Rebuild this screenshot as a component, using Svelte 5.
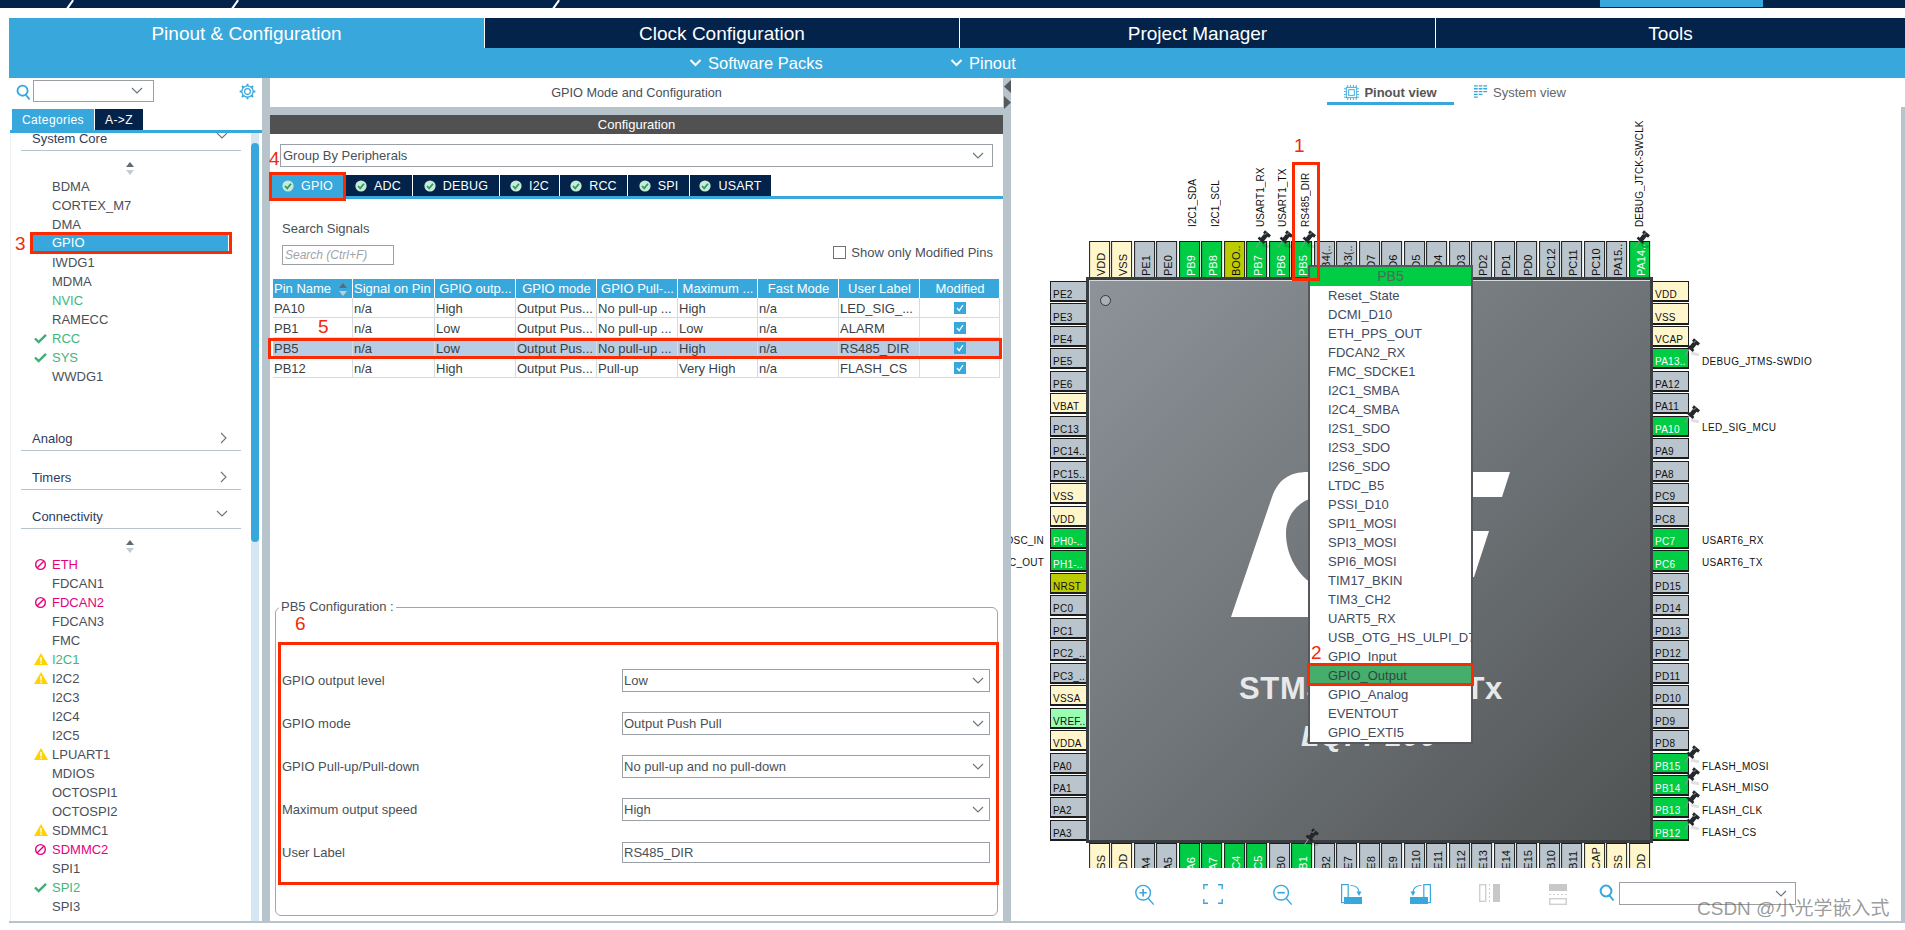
<script>
  const topPins = [
    ['VDD', 'p'], ['VSS', 'p'], ['PE1', ''], ['PE0', ''], ['PB9', 'g'], ['PB8', 'g'], ['BOO..', 'o'], ['PB7', 'g'], ['PB6', 'g'], ['PB5', 'g'],
    ['PB4(..', ''], ['PB3(..', ''], ['PD7', ''], ['PD6', ''], ['PD5', ''], ['PD4', ''], ['PD3', ''], ['PD2', ''], ['PD1', ''], ['PD0', ''],
    ['PC12', ''], ['PC11', ''], ['PC10', ''], ['PA15..', ''], ['PA14..', 'g']
  ];
  const leftPins = [
    ['PE2', ''], ['PE3', ''], ['PE4', ''], ['PE5', ''], ['PE6', ''], ['VBAT', 'p'], ['PC13', ''], ['PC14..', ''], ['PC15..', ''], ['VSS', 'p'],
    ['VDD', 'p'], ['PH0-..', 'g'], ['PH1-..', 'g'], ['NRST', 'o'], ['PC0', ''], ['PC1', ''], ['PC2_..', ''], ['PC3_..', ''], ['VSSA', 'p'], ['VREF..', 'm'],
    ['VDDA', 'p'], ['PA0', ''], ['PA1', ''], ['PA2', ''], ['PA3', '']
  ];
  const rightPins = [
    ['VDD', 'p'], ['VSS', 'p'], ['VCAP', 'p'], ['PA13..', 'g'], ['PA12', ''], ['PA11', ''], ['PA10', 'g'], ['PA9', ''], ['PA8', ''], ['PC9', ''],
    ['PC8', ''], ['PC7', 'g'], ['PC6', 'g'], ['PD15', ''], ['PD14', ''], ['PD13', ''], ['PD12', ''], ['PD11', ''], ['PD10', ''], ['PD9', ''],
    ['PD8', ''], ['PB15', 'g'], ['PB14', 'g'], ['PB13', 'g'], ['PB12', 'g']
  ];
  const bottomPins = [
    ['VSS', 'p'], ['VDD', 'p'], ['PA4', ''], ['PA5', ''], ['PA6', 'g'], ['PA7', 'g'], ['PC4', 'g'], ['PC5', 'g'], ['PB0', ''], ['PB1', 'g'],
    ['PB2', ''], ['PE7', ''], ['PE8', ''], ['PE9', ''], ['PE10', ''], ['PE11', ''], ['PE12', ''], ['PE13', ''], ['PE14', ''], ['PE15', ''],
    ['PB10', ''], ['PB11', ''], ['VCAP', 'p'], ['VSS', 'p'], ['VDD', 'p']
  ];

  const topLabels = [
    ['I2C1_SDA', 1194], ['I2C1_SCL', 1217], ['USART1_RX', 1262], ['USART1_TX', 1284], ['RS485_DIR', 1307], ['DEBUG_JTCK-SWCLK', 1641]
  ];
  const rightLabels = [
    ['DEBUG_JTMS-SWDIO', 362], ['LED_SIG_MCU', 428], ['USART6_RX', 541], ['USART6_TX', 563],
    ['FLASH_MOSI', 767], ['FLASH_MISO', 788], ['FLASH_CLK', 811], ['FLASH_CS', 833]
  ];
  const leftLabels = [['RCC_OSC_IN', 541], ['RCC_OSC_OUT', 563]];
  const thumbtacks = [
    [1256, 230], [1278, 230], [1301, 230], [1635, 230],
    [1685, 338], [1685, 405], [1685, 745], [1685, 767], [1685, 790], [1685, 812], [1304, 828]
  ];

  const popupItems = ['Reset_State', 'DCMI_D10', 'ETH_PPS_OUT', 'FDCAN2_RX', 'FMC_SDCKE1', 'I2C1_SMBA', 'I2C4_SMBA', 'I2S1_SDO', 'I2S3_SDO', 'I2S6_SDO', 'LTDC_B5', 'PSSI_D10', 'SPI1_MOSI', 'SPI3_MOSI', 'SPI6_MOSI', 'TIM17_BKIN', 'TIM3_CH2', 'UART5_RX', 'USB_OTG_HS_ULPI_D7', 'GPIO_Input', 'GPIO_Output', 'GPIO_Analog', 'EVENTOUT', 'GPIO_EXTI5'];

  const systemCore = [['BDMA'], ['CORTEX_M7'], ['DMA'], ['GPIO', 'sel'], ['IWDG1'], ['MDMA'], ['NVIC', 'ok'], ['RAMECC'], ['RCC', 'ok', 'check'], ['SYS', 'ok', 'check'], ['WWDG1']];
  const connectivity = [['ETH', 'bad', 'ban'], ['FDCAN1'], ['FDCAN2', 'bad', 'ban'], ['FDCAN3'], ['FMC'], ['I2C1', 'ok', 'warn'], ['I2C2', '', 'warn'], ['I2C3'], ['I2C4'], ['I2C5'], ['LPUART1', '', 'warn'], ['MDIOS'], ['OCTOSPI1'], ['OCTOSPI2'], ['SDMMC1', '', 'warn'], ['SDMMC2', 'bad', 'ban'], ['SPI1'], ['SPI2', 'ok', 'check'], ['SPI3']];

  const ipTabs = [['GPIO', 72], ['ADC', 69], ['DEBUG', 87], ['I2C', 60], ['RCC', 68], ['SPI', 62], ['USART', 82]];
  const columns = ['Pin Name', 'Signal on Pin', 'GPIO outp...', 'GPIO mode', 'GPIO Pull-...', 'Maximum ...', 'Fast Mode', 'User Label', 'Modified'];
  const rows = [
    ['PA10', 'n/a', 'High', 'Output Pus...', 'No pull-up ...', 'High', 'n/a', 'LED_SIG_...'],
    ['PB1', 'n/a', 'Low', 'Output Pus...', 'No pull-up ...', 'Low', 'n/a', 'ALARM'],
    ['PB5', 'n/a', 'Low', 'Output Pus...', 'No pull-up ...', 'High', 'n/a', 'RS485_DIR'],
    ['PB12', 'n/a', 'High', 'Output Pus...', 'Pull-up', 'Very High', 'n/a', 'FLASH_CS']
  ];
  const configRows = [
    ['GPIO output level', 'Low'], ['GPIO mode', 'Output Push Pull'], ['GPIO Pull-up/Pull-down', 'No pull-up and no pull-down'], ['Maximum output speed', 'High']
  ];
</script>

{#snippet chevron()}
  <svg class="chev" viewBox="0 0 12 8" width="12" height="8"><path d="M1 1l5 5 5-5" fill="none" stroke="#6b7278" stroke-width="1.1" /></svg>
{/snippet}

{#snippet sideItem(item)}
  <div class="side-item {item[1] || ''}">
    <span class="mark">
      {#if item[2] === 'check'}
        <svg viewBox="0 0 14 12" width="13" height="11"><path d="M1 6l4 4 8-8" fill="none" stroke="#3fae74" stroke-width="2.6" /></svg>
      {:else if item[2] === 'ban'}
        <svg viewBox="0 0 14 14" width="13" height="13"><circle cx="7" cy="7" r="5.2" fill="none" stroke="#e6007e" stroke-width="1.5" /><path d="M3.5 10.5l7-7" stroke="#e6007e" stroke-width="1.5" /></svg>
      {:else if item[2] === 'warn'}
        <svg viewBox="0 0 14 12" width="14" height="12"><path d="M7 0l7 12H0z" fill="#ffd200" /><path d="M7 4v4.5M7 9.5v1.5" stroke="#fff" stroke-width="1.5" /></svg>
      {/if}
    </span>
    <span class="item-text">{item[0]}</span>
  </div>
{/snippet}

{#snippet sortArrows()}
  <svg viewBox="0 0 8 13" width="8" height="13"><path d="M4 0l4 5H0z" fill="#5f6a72" /><path d="M4 13l4-5H0z" fill="#c4ccd2" /></svg>
{/snippet}

{#snippet okDot()}
  <svg viewBox="0 0 12 12" width="12" height="12"><circle cx="6" cy="6" r="5.6" fill="#c9ead8" /><path d="M3 6l2.2 2.4L9 3.8" fill="none" stroke="#27a162" stroke-width="1.8" /></svg>
{/snippet}

{#snippet rotateIcon()}
  <rect x=".6" y=".6" width="6.6" height="18" fill="none" stroke="#38a8dc" stroke-width="1.2" />
  <rect x="3" y="13" width="18" height="7" fill="#38a8dc" />
  <path d="M9.5 1.5c4.5 0 8 2 8.5 6.5" fill="none" stroke="#38a8dc" stroke-width="1.2" />
  <path d="M15.5 7.5h5l-2.5 4.5z" fill="#38a8dc" />
{/snippet}

<div class="app">
  <div class="menubar">
    <i class="slash s1"></i><i class="slash s2"></i><i class="slash s3"></i>
    <span class="menu-active"></span>
  </div>

  <nav class="maintabs">
    <div class="maintab active">Pinout &amp; Configuration</div>
    <div class="maintab">Clock Configuration</div>
    <div class="maintab">Project Manager</div>
    <div class="maintab">Tools</div>
  </nav>
  <div class="subbar">
    <span class="sub sub-packs"><svg viewBox="0 0 12 8" width="13" height="8"><path d="M1 1l5 5 5-5" fill="none" stroke="#fff" stroke-width="2" /></svg>Software Packs</span>
    <span class="sub sub-pinout"><svg viewBox="0 0 12 8" width="13" height="8"><path d="M1 1l5 5 5-5" fill="none" stroke="#fff" stroke-width="2" /></svg>Pinout</span>
  </div>

  <div class="workspace">
    <aside class="sidebar">
      <div class="side-search">
        <svg class="search-ico" viewBox="0 0 16 18" width="15" height="17"><circle cx="7" cy="7" r="5.4" fill="none" stroke="#38a8dc" stroke-width="2" /><path d="M10.5 11.5l4 5" stroke="#38a8dc" stroke-width="2" /></svg>
        <div class="combo">{@render chevron()}</div>
        <svg class="gear" viewBox="0 0 20 20" width="17" height="17"><circle cx="10" cy="10" r="3.4" fill="none" stroke="#38a8dc" stroke-width="1.4" /><circle cx="10" cy="10" r="6.6" fill="none" stroke="#38a8dc" stroke-width="1.4" /><path d="M10 .8v2.6M10 16.6v2.6M.8 10h2.6M16.6 10h2.6M3.5 3.5l1.8 1.8M14.7 14.7l1.8 1.8M3.5 16.5l1.8-1.8M14.7 5.3l1.8-1.8" stroke="#38a8dc" stroke-width="2.2" /></svg>
      </div>
      <div class="cat-tabs">
        <div class="cat-tab on">Categories</div>
        <div class="cat-tab">A-&gt;Z</div>
      </div>
      <div class="side-body">
        <div class="tree">
          <div class="group first">System Core <span class="g-ico">{@render chevron()}</span></div>
          <div class="sort">{@render sortArrows()}</div>
          {#each systemCore as item}{@render sideItem(item)}{/each}
          <div class="group analog">Analog <span class="g-ico"><svg viewBox="0 0 8 12" width="8" height="12"><path d="M1 1l5 5-5 5" fill="none" stroke="#6b7278" stroke-width="1.1" /></svg></span></div>
          <div class="group">Timers <span class="g-ico"><svg viewBox="0 0 8 12" width="8" height="12"><path d="M1 1l5 5-5 5" fill="none" stroke="#6b7278" stroke-width="1.1" /></svg></span></div>
          <div class="group">Connectivity <span class="g-ico">{@render chevron()}</span></div>
          <div class="sort">{@render sortArrows()}</div>
          {#each connectivity as item}{@render sideItem(item)}{/each}
        </div>
        <div class="scroll"><div class="thumb"></div></div>
      </div>
      <span class="callout n3">3</span>
      <span class="redbox gpio-box"></span>
    </aside>

    <div class="vsep"></div>

    <section class="center">
      <div class="center-title">GPIO Mode and Configuration</div>
      <div class="hband"></div>
      <div class="conf-bar">Configuration</div>
      <div class="group-select"><span>Group By Peripherals</span>{@render chevron()}</div>
      <div class="ip-tabs">
        {#each ipTabs as tab, i}
          <div class="ip-tab" class:on={i === 0} style="width:{tab[1]}px">{@render okDot()}<span>{tab[0]}</span></div>
        {/each}
      </div>
      <div class="signals">
        <div class="signal-left">
          <div class="muted">Search Signals</div>
          <div class="search-box">Search (Ctrl+F)</div>
        </div>
        <label class="only-mod"><span class="box"></span>Show only Modified Pins</label>
      </div>
      <div class="pin-table">
        <div class="tr head">
          {#each columns as col, i}
            <div class="td" class:left={i < 2}>{col}{#if i === 0}<span class="th-sort">{@render sortArrows()}</span>{/if}</div>
          {/each}
        </div>
        {#each rows as row, r}
          <div class="tr" class:picked={r === 2}>
            {#each row as cell}<div class="td">{cell}</div>{/each}
            <div class="td tick"><svg viewBox="0 0 12 12" width="12" height="12"><rect width="12" height="12" fill="#38a8dc" /><path d="M3 6l2.2 2.6L9 3" fill="none" stroke="#fff" stroke-width="1.3" /></svg></div>
          </div>
        {/each}
      </div>

      <fieldset class="pin-config">
        <legend>PB5 Configuration :</legend>
        <div class="config-rows">
          {#each configRows as c}
            <div class="config-row">
              <span>{c[0]}</span>
              <div class="field"><span>{c[1]}</span>{@render chevron()}</div>
            </div>
          {/each}
          <div class="config-row">
            <span>User Label</span>
            <div class="field input"><span>RS485_DIR</span></div>
          </div>
        </div>
      </fieldset>

      <span class="callout n4">4</span>
      <span class="callout n5">5</span>
      <span class="callout n6">6</span>
      <span class="redbox tab-box"></span>
      <span class="redbox row-box"></span>
      <span class="redbox conf-box"></span>
    </section>

    <div class="vsep grip">
      <svg viewBox="0 0 7 13" width="7" height="13"><path d="M0 6.5L7 0v13z" fill="#55595d" /></svg>
      <svg viewBox="0 0 7 13" width="7" height="13"><path d="M7 6.5L0 0v13z" fill="#55595d" /></svg>
    </div>

    <section class="pinout">
      <div class="view-tabs">
        <div class="view-tab on">
          <svg viewBox="0 0 16 16" width="15" height="15"><rect x="2.5" y="2.5" width="11" height="11" fill="none" stroke="#38a8dc" /><rect x="5" y="5" width="6" height="6" fill="none" stroke="#38a8dc" /><path d="M4 0v2M7 0v2M10 0v2M13 0v2M4 14v2M7 14v2M10 14v2M13 14v2M0 4h2M0 7h2M0 10h2M0 13h2M14 4h2M14 7h2M14 10h2M14 13h2" stroke="#38a8dc" /></svg>
          Pinout view
        </div>
        <div class="view-tab">
          <svg viewBox="0 0 15 16" width="14" height="15"><path d="M0 1h4M5 1h4M10 1h4M0 4h4M5 4h4M10 4h4M0 7h4M5 7h4M10 7h4M0 10h4M5 10h4M0 13h4" stroke="#38a8dc" stroke-width="1.4" /></svg>
          System view
        </div>
      </div>

      <div class="canvas">
        <div class="chip">
          <div class="pins top">
            {#each topPins as p}<div class="pin {p[1]}"><span>{p[0]}</span></div>{/each}
          </div>
          <div class="pins left">
            {#each leftPins as p}<div class="pin {p[1]}"><span>{p[0]}</span></div>{/each}
          </div>
          <div class="die">
            <i class="dot"></i>
            <svg class="logo" viewBox="0 0 290 150" width="290" height="150">
              <path d="M0 145L41 25C47 8 58 0 77 0H279L271 25H90C70 25 55 42 55 61C55 82 65 98 76 108L100 120H200V145z" fill="#fff" />
              <path d="M200 59H258L243 105H200z" fill="#fff" />
            </svg>
            <div class="part">STM32H723VGTx</div>
            <div class="pkg">LQFP100</div>
          </div>
          <div class="pins right">
            {#each rightPins as p}<div class="pin {p[1]}"><span>{p[0]}</span></div>{/each}
          </div>
          <div class="pins bottom">
            {#each bottomPins as p}<div class="pin {p[1]}"><span>{p[0]}</span></div>{/each}
          </div>
        </div>

        {#each topLabels as l}
          <span class="sig vert" style="left:{l[1] - 1012 - 7}px">{l[0]}</span>
        {/each}
        {#each rightLabels as l}
          <span class="sig" style="left:{1703 - 1012}px;top:{l[1] - 107 - 7}px">{l[0]}</span>
        {/each}
        {#each leftLabels as l}
          <span class="sig to-left" style="top:{l[1] - 107 - 7}px">{l[0]}</span>
        {/each}
        {#each thumbtacks as t}
          <svg class="tack" style="left:{t[0] - 1012}px;top:{t[1] - 107}px" viewBox="0 0 16 18" width="16" height="18">
            <path d="M7 15l8 2" stroke="#000" stroke-opacity=".12" stroke-width="3" />
            <path d="M1 17.5L6 10" stroke="#8f9396" stroke-width="1.1" />
            <path d="M3.5 7.5L9.5 13" stroke="#24282b" stroke-width="2.6" />
            <path d="M6.5 10.5L11.5 4.5" stroke="#24282b" stroke-width="4.4" />
            <path d="M9 1.5L15 6.5" stroke="#24282b" stroke-width="3" />
            <path d="M9.5 5L12 2.5" stroke="#9a9fa3" stroke-width="1" />
          </svg>
        {/each}

        <div class="popup">
          <div class="popup-head">PB5</div>
          {#each popupItems as item}
            <div class="popup-item" class:active={item === 'GPIO_Output'}>{item}</div>
          {/each}
        </div>

        <span class="callout n1">1</span>
        <span class="callout n2">2</span>
        <span class="redbox dir-box"></span>
        <span class="redbox out-box"></span>
      </div>

      <div class="toolbar">
        <svg class="tool t-a" viewBox="0 0 22 24" width="21" height="22"><circle cx="9.5" cy="9.5" r="8" fill="none" stroke="#38a8dc" stroke-width="1.5" /><path d="M15 15.5l6 7" stroke="#38a8dc" stroke-width="1.5" /><path d="M9.5 5.5v8M5.5 9.5h8" stroke="#38a8dc" stroke-width="1.8" /></svg>
        <svg class="tool t-b" viewBox="0 0 20 20" width="20" height="20"><path d="M5 .8H.8v4.4M15 .8h4.2v4.4M.8 15v4.2h4.2M19.2 15v4.2H15" fill="none" stroke="#38a8dc" stroke-width="1.4" /></svg>
        <svg class="tool t-c" viewBox="0 0 22 24" width="21" height="22"><circle cx="9.5" cy="9.5" r="8" fill="none" stroke="#38a8dc" stroke-width="1.5" /><path d="M15 15.5l6 7" stroke="#38a8dc" stroke-width="1.5" /><path d="M5.5 9.5h8" stroke="#38a8dc" stroke-width="1.8" /></svg>
        <svg class="tool t-d" viewBox="0 0 21 20" width="21" height="20">{@render rotateIcon()}</svg>
        <svg class="tool t-e" viewBox="0 0 21 20" width="21" height="20"><g transform="translate(21 0) scale(-1 1)">{@render rotateIcon()}</g></svg>
        <svg class="tool t-f" viewBox="0 0 21 18" width="21" height="18"><rect x=".7" y=".7" width="6" height="16.6" fill="none" stroke="#cfcfcf" stroke-width="1.4" /><rect x="14" y="0" width="7" height="18" fill="#c8c8c8" /><path d="M10.5 0v18" stroke="#cfcfcf" stroke-dasharray="2 2" /></svg>
        <svg class="tool t-g" viewBox="0 0 18 21" width="18" height="21"><rect x="0" y="0" width="18" height="7" fill="#c8c8c8" /><rect x=".7" y="14.7" width="16.6" height="5.6" fill="none" stroke="#cfcfcf" stroke-width="1.4" /><path d="M0 10.5h18" stroke="#cfcfcf" stroke-dasharray="2 2" /></svg>
        <svg class="tool t-h" viewBox="0 0 16 18" width="16" height="18"><circle cx="7" cy="7" r="5.4" fill="none" stroke="#38a8dc" stroke-width="2" /><path d="M10.5 11.5l4 5" stroke="#38a8dc" stroke-width="2" /></svg>
        <div class="combo tool-combo">{@render chevron()}</div>
      </div>
      <div class="watermark">CSDN @小光学嵌入式</div>
    </section>
    <div class="edge"></div>
  </div>
</div>

<style>
  :global(body) {
    margin: 0;
    background: #fff;
  }

  .app {
    width: 1905px;
    height: 930px;
    overflow: hidden;
    font-family: "Liberation Sans", Arial, sans-serif;
    font-size: 13px;
    color: #3f4650;
    position: relative;
  }

  .menubar {
    height: 8px;
    background: #03234b;
    margin-bottom: 10px;
    position: relative;
  }
  .slash {
    position: absolute;
    top: -1px;
    width: 1.5px;
    height: 11px;
    background: #fff;
    transform: rotate(35deg);
  }
  .s1 { left: 69px; }
  .s2 { left: 234px; }
  .s3 { left: 555px; }
  .menu-active {
    position: absolute;
    left: 1600px;
    top: 0;
    width: 163px;
    height: 7px;
    background: #38a8dc;
  }

  .maintabs {
    display: grid;
    grid-template-columns: 475px 474px 475px 1fr;
    height: 30px;
    margin-left: 9px;
    column-gap: 1px;
    background: #fff;
  }
  .maintab {
    background: #03234b;
    color: #fff;
    font-size: 19px;
    line-height: 31px;
    text-align: center;
  }
  .maintab.active { background: #38a8dc; }

  .subbar {
    height: 30px;
    margin-left: 9px;
    background: #38a8dc;
    position: relative;
    color: #fff;
    font-size: 16.5px;
    line-height: 30px;
  }
  .sub {
    position: absolute;
    top: 0;
    display: flex;
    align-items: center;
    gap: 6px;
  }
  .sub-packs { left: 680px; }
  .sub-pinout { left: 941px; }

  .workspace {
    display: flex;
    height: 845px;
    margin-left: 9px;
    position: relative;
    box-sizing: border-box;
    border-bottom: 2px solid #b8c4cc;
  }

  .sidebar {
    width: 253px;
    flex: none;
    position: relative;
    background: #fff;
  }
  .side-search {
    height: 31px;
    display: flex;
    align-items: flex-start;
    padding-left: 7px;
    position: relative;
  }
  .search-ico { margin-top: 6px; }
  .combo {
    width: 121px;
    height: 22px;
    border: 1px solid #9aa0a6;
    margin: 2px 0 0 2px;
    display: flex;
    align-items: center;
    justify-content: flex-end;
    padding-right: 10px;
    box-sizing: border-box;
    background: #fff;
  }
  .gear {
    position: absolute;
    left: 230px;
    top: 5px;
  }
  .cat-tabs {
    display: flex;
    gap: 1px;
    margin-left: 3px;
    height: 21px;
  }
  .cat-tab {
    width: 48px;
    background: #03234b;
    color: #fff;
    font-size: 12px;
    line-height: 22px;
    text-align: center;
    letter-spacing: .4px;
  }
  .cat-tab.on {
    width: 82px;
    background: #38a8dc;
  }
  .side-body {
    border-top: 3px solid #38a8dc;
    margin-left: 1px;
    height: 788px;
    display: flex;
    position: relative;
    overflow: hidden;
    box-shadow: inset 1px 0 0 #eef2f6;
  }
  .tree {
    width: 241px;
    flex: none;
    margin-top: -3px;
  }
  .group {
    margin: 18px 0 0 11px;
    width: 209px;
    height: 20px;
    line-height: 18px;
    border-bottom: 1px solid #b8c4cc;
    color: #2f3c5c;
    display: flex;
    justify-content: space-between;
    align-items: flex-start;
    padding-left: 11px;
  }
  .group.first { margin-top: 0; }
  .group.analog { margin-top: 44.5px; }
  .g-ico {
    display: flex;
    margin: 2px 13px 0 0;
  }
  .sort {
    height: 13px;
    margin: 10.5px 0 2px 0;
    width: 240px;
    display: flex;
    justify-content: center;
  }
  .side-item {
    height: 19px;
    line-height: 19px;
    display: flex;
    align-items: center;
    white-space: nowrap;
    color: #4a4f57;
  }
  .mark {
    width: 42px;
    flex: none;
    padding-left: 24px;
    box-sizing: border-box;
    display: flex;
    align-items: center;
  }
  .side-item.ok { color: #3fb57c; }
  .side-item.bad { color: #e6007e; }
  .side-item.sel .item-text {
    background: #38a8dc;
    color: #fff;
    width: 195px;
    margin-left: -19px;
    padding-left: 19px;
    box-sizing: border-box;
    height: 16px;
    line-height: 16px;
  }
  .scroll {
    width: 8px;
    background: #d6e6f3;
    flex: none;
    height: 100%;
    padding-top: 10px;
    box-sizing: border-box;
  }
  .thumb {
    height: 399px;
    background: #38a8dc;
    border-radius: 4px;
  }

  .vsep {
    width: 8px;
    flex: none;
    background: #b8c4cc;
  }
  .grip {
    display: flex;
    flex-direction: column;
    gap: 3px;
    padding: 2px 0 0 1px;
    box-sizing: border-box;
  }

  .center {
    width: 733px;
    flex: none;
    position: relative;
    background: #fff;
  }
  .center-title {
    height: 29px;
    line-height: 30px;
    text-align: center;
    font-size: 12.7px;
    color: #4a4f57;
  }
  .hband {
    height: 8px;
    background: #b8c4cc;
  }
  .conf-bar {
    height: 19px;
    line-height: 19px;
    background: #515151;
    color: #fff;
    text-align: center;
  }
  .group-select {
    margin: 10px 10px 8px 10px;
    height: 23px;
    border: 1px solid #9aa0a6;
    box-sizing: border-box;
    display: flex;
    justify-content: space-between;
    align-items: center;
    padding: 0 3px 0 2px;
    color: #4a4f57;
  }
  .group-select .chev { margin-right: 5px; }
  .ip-tabs {
    display: flex;
    height: 21px;
    padding-left: 2px;
    border-bottom: 3px solid #38a8dc;
  }
  .ip-tab {
    background: #03234b;
    color: #fff;
    box-sizing: border-box;
    font-size: 12.5px;
    display: flex;
    align-items: center;
    justify-content: center;
    gap: 7px;
    border-right: 1px solid #fff;
    letter-spacing: .2px;
  }
  .ip-tab.on { background: #38a8dc; }

  .signals {
    display: flex;
    justify-content: space-between;
    padding: 23px 10px 0 12px;
    height: 57px;
  }
  .muted {
    color: #4a4f57;
    height: 16px;
    line-height: 14px;
  }
  .search-box {
    margin-top: 7px;
    width: 112px;
    height: 20px;
    border: 1px solid #9aa0a6;
    box-sizing: border-box;
    font-size: 12px;
    font-style: italic;
    color: #a0a4a8;
    line-height: 18px;
    padding-left: 2px;
  }
  .only-mod {
    display: flex;
    align-items: center;
    gap: 5px;
    height: 14px;
    margin-top: 23px;
    color: #4a4f57;
  }
  .box {
    width: 11px;
    height: 11px;
    border: 1px solid #6b7278;
    display: block;
  }

  .pin-table {
    margin-left: 3px;
    width: 727px;
  }
  .tr {
    display: grid;
    grid-template-columns: 80px 82px 81px 81px 81px 80px 81px 81px 80px;
    height: 20px;
    border-bottom: 1px solid #d5dbe0;
    box-sizing: border-box;
  }
  .tr.head {
    height: 19px;
    border-bottom: 0;
  }
  .td {
    border-right: 1px solid #d5dbe0;
    box-sizing: border-box;
    line-height: 21px;
    padding-left: 1px;
    color: #3a3f46;
    white-space: nowrap;
    overflow: hidden;
  }
  .head .td {
    background: #38a8dc;
    color: #fff;
    border-right: 1px solid #fff;
    text-align: center;
    line-height: 20px;
    position: relative;
  }
  .head .td.left { text-align: left; }
  .th-sort {
    position: absolute;
    right: 5px;
    top: 3px;
  }
  .tr.picked { background: #b8cde3; }
  .tick {
    display: flex;
    align-items: center;
    justify-content: center;
    padding: 0;
  }

  .pin-config {
    position: absolute;
    left: 5px;
    top: 522px;
    width: 723px;
    height: 316px;
    margin: 0;
    padding: 0;
    border: 1px solid #a0a6ab;
    border-radius: 6px;
    box-sizing: border-box;
  }
  .pin-config legend {
    color: #4a4f57;
    padding: 0 2px;
    margin-left: 3px;
    line-height: 14px;
  }
  .config-rows {
    padding: 55px 7px 0 6px;
    display: grid;
    row-gap: 20px;
  }
  .config-row {
    display: flex;
    justify-content: space-between;
    align-items: center;
    height: 23px;
    color: #4a4f57;
  }
  .field {
    width: 368px;
    height: 23px;
    border: 1px solid #9aa0a6;
    box-sizing: border-box;
    display: flex;
    justify-content: space-between;
    align-items: center;
    padding: 0 5px 0 1px;
  }
  .field.input { height: 21px; }

  .callout {
    position: absolute;
    color: #f02a0c;
    font-size: 19px;
    line-height: 20px;
  }
  .redbox {
    position: absolute;
    border: 3px solid #fc2a00;
    box-sizing: border-box;
    pointer-events: none;
  }
  .n3 { left: 6px; top: 156px; }
  .gpio-box { left: 21px; top: 154px; width: 202px; height: 22px; }
  .n4 { left: -1px; top: 71px; }
  .n5 { left: 48px; top: 239px; }
  .n6 { left: 25px; top: 536px; }
  .tab-box { left: -1px; top: 94px; width: 77px; height: 29px; }
  .row-box { left: -2px; top: 260px; width: 734px; height: 21px; }
  .conf-box { left: 8px; top: 564px; width: 721px; height: 243px; }

  .pinout {
    flex: 1;
    position: relative;
    min-width: 0;
    background: #fff;
  }
  .view-tabs {
    display: flex;
    height: 29px;
    padding-left: 316px;
    color: #666;
  }
  .view-tab {
    width: 127px;
    height: 27px;
    display: flex;
    align-items: center;
    justify-content: center;
    gap: 5px;
    margin-right: 20px;
    padding-top: 1px;
    box-sizing: border-box;
  }
  .view-tab.on {
    border-bottom: 3px solid #38a8dc;
    font-weight: bold;
    color: #555;
    padding-top: 4px;
  }
  .view-tab:last-child { width: 92px; }

  .canvas {
    position: absolute;
    left: 0;
    right: 0;
    top: 29px;
    height: 761px;
    overflow: hidden;
  }

  .chip {
    position: absolute;
    left: 39px;
    top: 134px;
    display: grid;
    grid-template-columns: 37px 565px 37px;
    grid-template-rows: 37px 564px 37px;
  }
  .pins {
    display: grid;
    gap: 1.4px;
  }
  .pins.top, .pins.bottom {
    grid-column: 2;
    grid-template-columns: repeat(25, 21.1px);
    padding-left: 2px;
  }
  .pins.left {
    grid-column: 1;
    grid-row: 2;
    padding-top: 3px;
    grid-template-rows: repeat(25, 21.07px);
  }
  .pins.right {
    grid-column: 3;
    grid-row: 2;
    padding-top: 3px;
    grid-template-rows: repeat(25, 21.07px);
  }
  .pins.bottom { grid-row: 3; padding-top: 1px; }
  .pin {
    background: #b9c4cc;
    border: 1px solid #1c1c1c;
    border-bottom-width: 2px;
    box-sizing: border-box;
    color: #111;
    font-size: 10px;
    letter-spacing: .25px;
    white-space: nowrap;
    overflow: hidden;
    display: flex;
    align-items: flex-end;
    padding-left: 2px;
  }
  .pin.p { background: #fff6cc; }
  .pin.g { background: #00cc44; color: #fff; }
  .pin.o { background: #bdcc00; }
  .pin.m { background: #99ffb3; }
  .pins.top .pin, .pins.bottom .pin {
    writing-mode: vertical-rl;
    transform: rotate(180deg);
    padding: 1px 3px 0 0;
    align-items: center;
    justify-content: flex-start;
    border-width: 1px;
    font-size: 11px;
    letter-spacing: 0;
  }

  .die {
    grid-column: 2;
    grid-row: 2;
    position: relative;
    box-sizing: border-box;
    border: 2px solid #3a3d40;
    outline: 1px solid #3a3d40;
    box-shadow: inset 1px 1px 0 #d5d9dc;
    background: linear-gradient(135deg, #8d9398 0%, #6f7478 50%, #505353 100%);
    overflow: hidden;
  }
  .dot {
    position: absolute;
    left: 11px;
    top: 15px;
    width: 11px;
    height: 11px;
    box-sizing: border-box;
    border: 1px solid #33373a;
    border-radius: 50%;
    background: #aab0b4;
  }
  .logo {
    position: absolute;
    left: 142px;
    top: 192px;
  }
  .part {
    position: absolute;
    left: 3px;
    right: 0;
    top: 391px;
    text-align: center;
    color: #e6e8ea;
    font-size: 31px;
    font-weight: bold;
    letter-spacing: .7px;
    line-height: 36px;
  }
  .pkg {
    position: absolute;
    left: 0;
    right: 0;
    top: 439px;
    text-align: center;
    color: #e6e8ea;
    font-size: 30px;
    font-weight: bold;
    font-style: italic;
    letter-spacing: 1px;
    line-height: 34px;
  }

  .sig {
    position: absolute;
    color: #111;
    font-size: 10px;
    letter-spacing: .35px;
    line-height: 14px;
    white-space: nowrap;
  }
  .sig.vert {
    writing-mode: vertical-rl;
    transform: rotate(180deg);
    height: 120px;
    top: 0;
    letter-spacing: .1px;
  }
  .sig.to-left {
    right: calc(100% - 33px);
    letter-spacing: .2px;
  }
  .tack { position: absolute; }

  .popup {
    position: absolute;
    left: 297px;
    top: 158px;
    width: 165px;
    box-sizing: border-box;
    border: 2px solid #55595d;
    background: #fff;
  }
  .popup-head {
    height: 19px;
    line-height: 19px;
    text-align: center;
    background: #00cc44;
    color: #4b6b58;
    font-size: 14px;
  }
  .popup-item {
    height: 19px;
    line-height: 19px;
    padding-left: 18px;
    white-space: nowrap;
    overflow: hidden;
    color: #3f4a60;
  }
  .popup-item.active { background: #46ae6c; color: #2c4a3c; }

  .n1 { left: 283px; top: 29px; }
  .n2 { left: 300px; top: 536px; }
  .dir-box { left: 281px; top: 55px; width: 28px; height: 119px; }
  .out-box { left: 296px; top: 556px; width: 167px; height: 23px; }

  .toolbar .tool { position: absolute; top: 806px; }
  .t-a { left: 123px; }
  .t-b { left: 192px; }
  .t-c { left: 261px; }
  .t-d { left: 330px; }
  .t-e { left: 399px; }
  .t-f { left: 468px; }
  .t-g { left: 538px; }
  .t-h { left: 588px; }
  .tool-combo {
    position: absolute;
    left: 608px;
    top: 804px;
    width: 177px;
    height: 23px;
    margin: 0;
    padding-right: 8px;
  }
  .watermark {
    position: absolute;
    left: 686px;
    top: 819px;
    font-family: "Liberation Sans", "Noto Sans CJK SC", sans-serif;
    font-size: 19px;
    line-height: 24px;
    color: rgba(90, 90, 90, .62);
    white-space: nowrap;
  }

  .edge {
    width: 4px;
    flex: none;
    margin-top: 29px;
    background: #b8c4cc;
  }
</style>
